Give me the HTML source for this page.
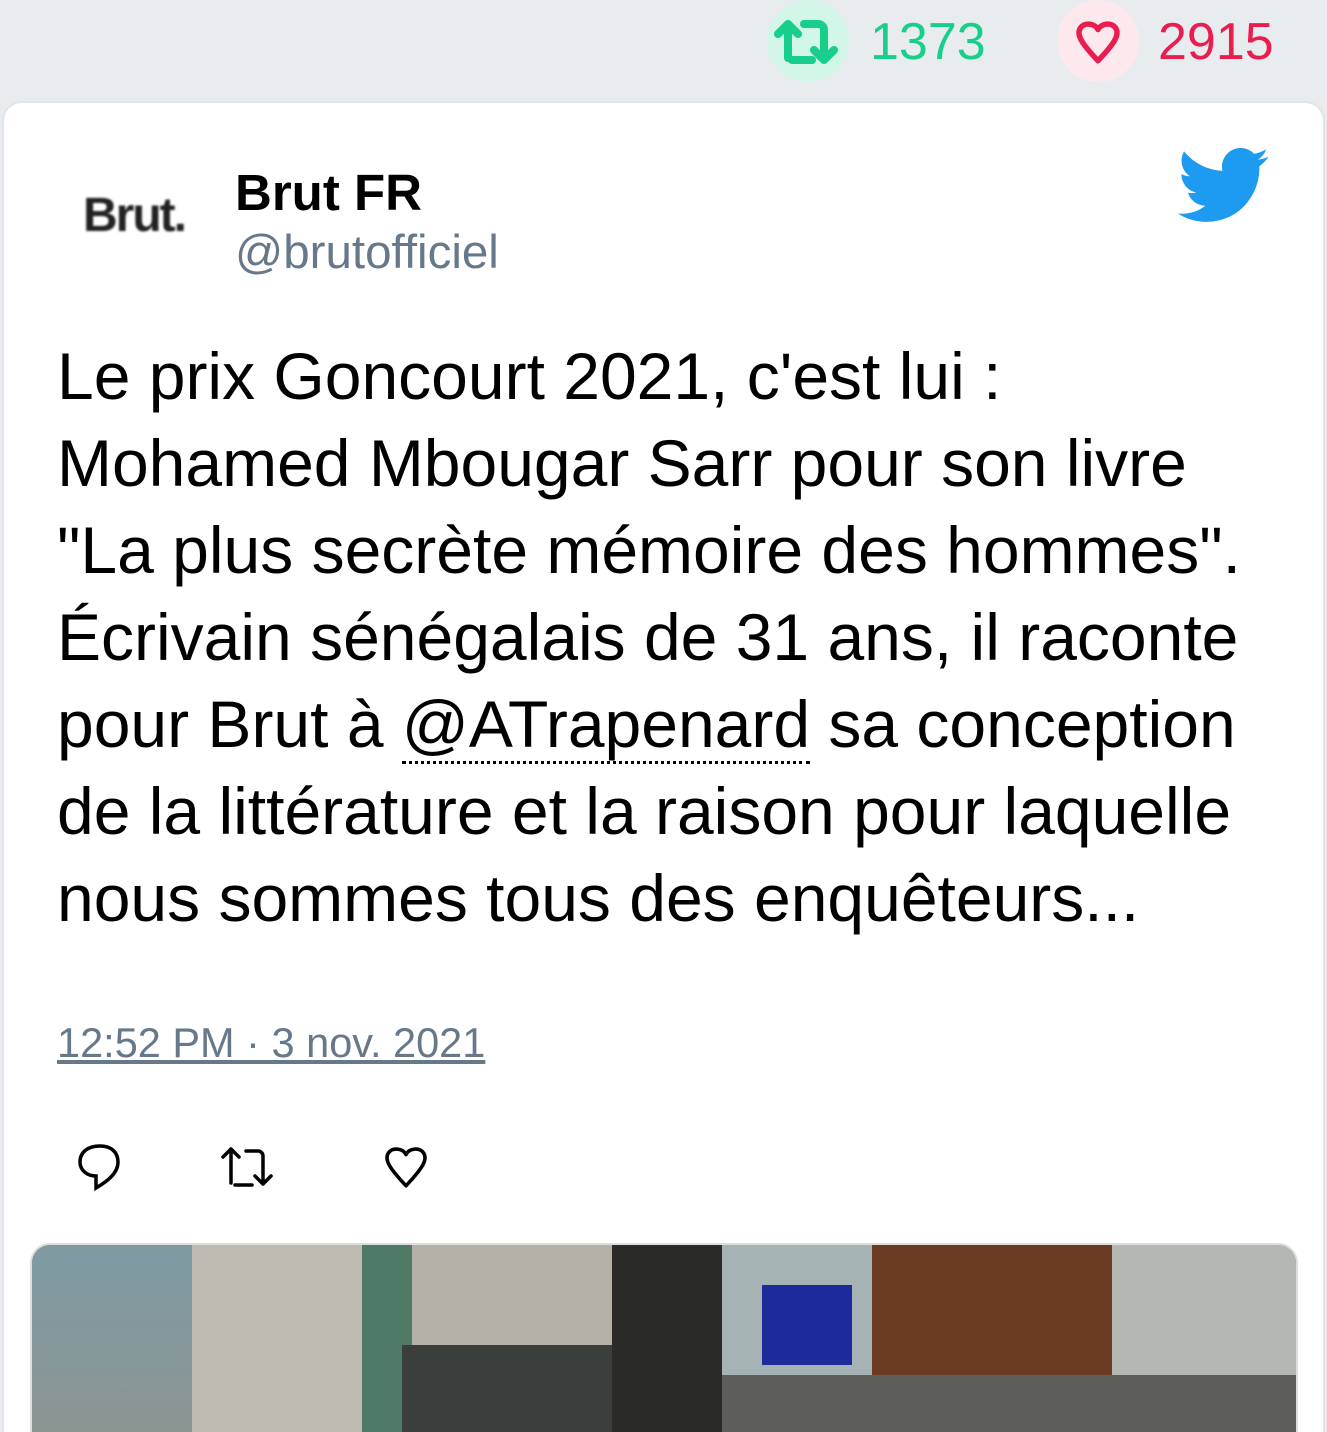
<!DOCTYPE html>
<html><head><meta charset="utf-8"><style>
html,body{margin:0;padding:0;width:1327px;height:1432px;overflow:hidden}
body{background:#e9ecef;font-family:"Liberation Sans",sans-serif;position:relative}
.card{position:absolute;left:4px;top:103px;width:1319px;height:1360px;background:#fff;border-radius:18px;box-shadow:0 0 0 2px #e1e4e8}
.abs{position:absolute}
.circ{position:absolute;width:82px;height:82px;border-radius:50%}
.text{position:absolute;left:57px;top:333px;font-size:66px;line-height:87px;color:#000;white-space:nowrap}
.img{position:absolute;left:32px;top:1245px;width:1264px;height:210px;border-radius:18px;overflow:hidden;box-shadow:0 0 0 2px #ddd;background:#8a8a80}
</style></head><body>
<div class="circ" style="left:767px;top:0;background:#d2f6e8"></div>
<svg class="abs" style="left:774px;top:18px" width="66" height="48" viewBox="0 0 66 48" fill="none" stroke="#17cf8a" stroke-width="8" stroke-linecap="round" stroke-linejoin="round"><path d="M14 40V6M4 16L14 6 24 16"/><path d="M18 42H38"/><path d="M30 6h14a6 6 0 0 1 6 6v30M40 32l10 10 10-10"/></svg>
<div class="abs" style="left:870px;top:12px;font-size:52px;color:#17cf8a">1373</div>
<div class="circ" style="left:1057px;top:0;background:#fde8ee"></div>
<svg class="abs" style="left:1073px;top:16px" width="50" height="50" viewBox="0 0 24 24" fill="none" stroke="#e91e4f" stroke-width="2.6" stroke-linejoin="round"><path d="M12 6.5C10.5 3.5 5.5 2.8 3.5 5.8 1.5 9 4 13 12 21.5 20 13 22.5 9 20.5 5.8 18.5 2.8 13.5 3.5 12 6.5z"/></svg>
<div class="abs" style="left:1158px;top:12px;font-size:52px;color:#e91e4f">2915</div>

<div class="card"></div>
<div class="abs" style="left:83px;top:188px;font-size:48px;font-weight:bold;color:#222;letter-spacing:-2px;filter:blur(1px)">Brut.</div>
<div class="abs" style="left:235px;top:163px;font-size:51px;font-weight:bold;color:#000">Brut FR</div>
<div class="abs" style="left:235px;top:225px;font-size:47.5px;color:#66788a">@brutofficiel</div>
<svg class="abs" style="left:1174px;top:137px" width="96" height="96" viewBox="0 0 24 24"><path fill="#1d9bf0" d="M23.643 4.937c-.835.37-1.732.62-2.675.733.962-.576 1.7-1.490 2.048-2.578-.9.534-1.897.922-2.958 1.13-.85-.904-2.06-1.470-3.4-1.470-2.572 0-4.658 2.086-4.658 4.660 0 .364.042.718.12 1.060-3.873-.195-7.304-2.050-9.602-4.868-.4.690-.630 1.490-.630 2.342 0 1.616.823 3.043 2.072 3.878-.764-.025-1.482-.234-2.110-.583v.06c0 2.257 1.605 4.140 3.737 4.568-.392.106-.803.162-1.227.162-.3 0-.593-.028-.877-.082.593 1.850 2.313 3.198 4.352 3.234-1.595 1.250-3.604 1.995-5.786 1.995-.376 0-.747-.022-1.112-.065 2.062 1.323 4.510 2.093 7.140 2.093 8.570 0 13.255-7.098 13.255-13.254 0-.2-.005-.402-.014-.602.910-.658 1.700-1.477 2.323-2.410z"/></svg>

<div class="text">Le prix Goncourt 2021, c'est lui :<br>Mohamed Mbougar Sarr pour son livre<br>"La plus secrète mémoire des hommes".<br>Écrivain sénégalais de 31 ans, il raconte<br>pour Brut à <span style="border-bottom:3px dotted #000">@ATrapenard</span> sa conception<br>de la littérature et la raison pour laquelle<br>nous sommes tous des enquêteurs...</div>

<div class="abs" style="left:57px;top:1019px;font-size:41.5px;color:#66788a;text-decoration:underline">12:52 PM · 3 nov. 2021</div>

<svg class="abs" style="left:76px;top:1141px" width="48" height="52" viewBox="0 0 48 52" fill="none" stroke="#000" stroke-width="3.5"><path d="M24 5C12 5 4 11 4 21c0 9 8 14 16 14v12c10-6 22-14 22-26C42 11 35 5 24 5z"/></svg>
<svg class="abs" style="left:220px;top:1145px" width="62" height="44" viewBox="0 0 62 44" fill="none" stroke="#000" stroke-width="3.5" stroke-linecap="round" stroke-linejoin="round"><path d="M11 38V4M3 12l8-8 8 8"/><path d="M15 40H32"/><path d="M26 6h12a5 5 0 0 1 5 5v28M35 31l8 8 8-8"/></svg>
<svg class="abs" style="left:381px;top:1141px" width="50" height="50" viewBox="0 0 24 24" fill="none" stroke="#000" stroke-width="1.7" stroke-linejoin="round"><path d="M12 6.5C10.5 3.5 5.5 2.8 3.5 5.8 1.5 9 4 13 12 21.5 20 13 22.5 9 20.5 5.8 18.5 2.8 13.5 3.5 12 6.5z"/></svg>

<div class="img">
<div class="abs" style="left:0;top:0;width:160px;height:220px;background:linear-gradient(#7f9aa3,#8d9590)"></div>
<div class="abs" style="left:160px;top:0;width:170px;height:220px;background:#bdbbb2"></div>
<div class="abs" style="left:330px;top:0;width:50px;height:220px;background:#4f7a66"></div>
<div class="abs" style="left:380px;top:0;width:200px;height:220px;background:#b5b0a8"></div>
<div class="abs" style="left:370px;top:100px;width:250px;height:120px;background:#3a3e3c"></div>
<div class="abs" style="left:580px;top:0;width:110px;height:220px;background:#2a2a28"></div>
<div class="abs" style="left:690px;top:0;width:150px;height:140px;background:#a6b3b5"></div>
<div class="abs" style="left:730px;top:40px;width:90px;height:80px;background:#1c2a9c"></div>
<div class="abs" style="left:840px;top:0;width:240px;height:140px;background:#6b3a22"></div>
<div class="abs" style="left:1080px;top:0;width:184px;height:220px;background:#b3b8b2"></div>
<div class="abs" style="left:690px;top:130px;width:574px;height:90px;background:#5e5e58"></div>
</div>
</body></html>
